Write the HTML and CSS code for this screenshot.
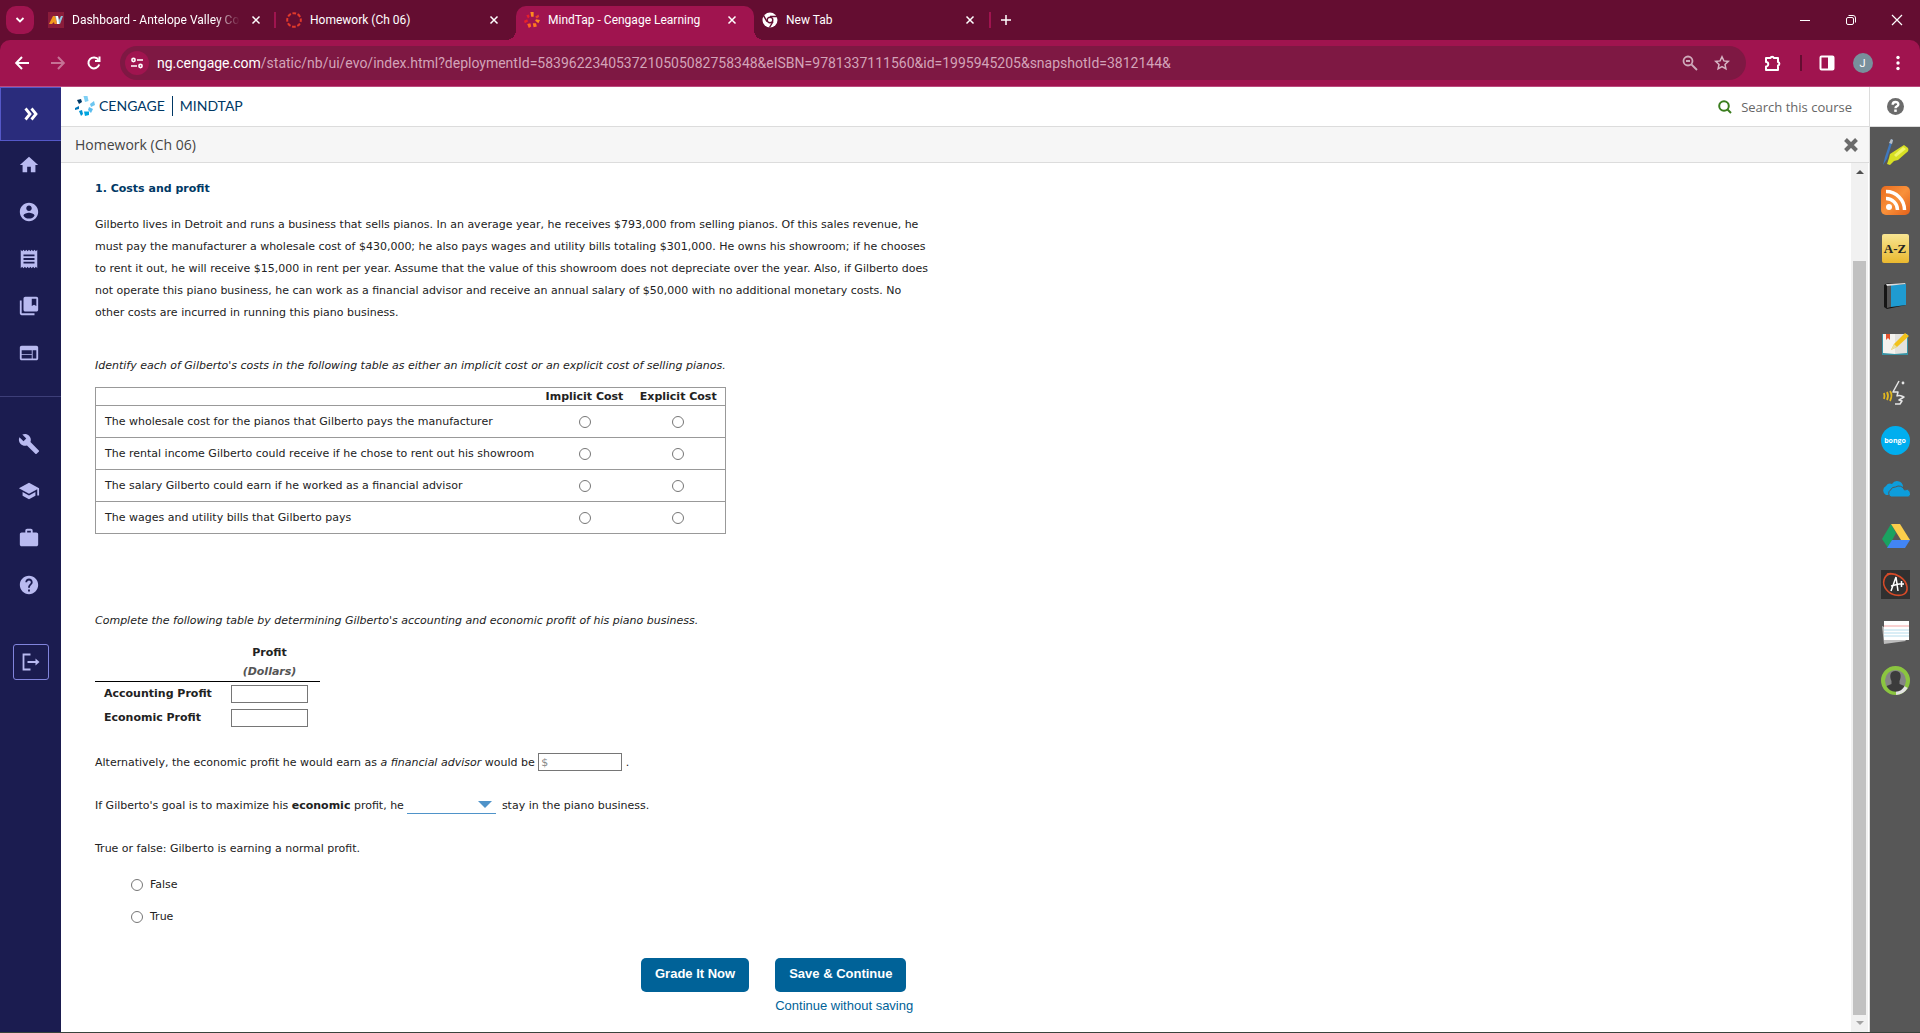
FILE: index.html
```html
<!DOCTYPE html>
<html lang="en">
<head>
    <meta charset="UTF-8">
    <meta name="viewport" content="width=device-width, initial-scale=1.0">
    <title>MindTap - Cengage Learning</title>
    <link rel="stylesheet" href="styles.css">
</head>
<body>
    <svg class="sprite" aria-hidden="true">
        <symbol id="x" viewBox="0 0 10 10"><path d="M1.5 1.5l7 7M8.5 1.5l-7 7" fill="none" stroke="currentColor" stroke-width="1.5"/></symbol>
    </svg>

    <!-- Browser tabs -->
    <div class="tab-strip">
        <button class="tab-search" aria-label="Search tabs">
            <svg width="10" height="10" viewBox="0 0 10 10"><path d="M1.5 3l3.500 3.500L8.500 3" fill="none" stroke="#fff" stroke-width="1.800"/></svg>
        </button>
        <div class="tab">
            <svg width="16" height="16" viewBox="0 0 16 16"><rect width="16" height="16" fill="#8a1c3a"/><path d="M1 12L5 4h2.500l1.500 8H6.500L6 10l-2 2z" fill="#f29a1f"/><path d="M7 4h3l1 4 2-4h2l-3 8h-2z" fill="#8fc5dd"/><path d="M8 4l2 0 1 8H9z" fill="#fff"/></svg>
            <span class="tab-title faded">Dashboard - Antelope Valley Co</span>
            <button class="tab-close" aria-label="Close tab"><svg width="10" height="10"><use href="#x"/></svg></button>
        </div>
        <div class="tab divided">
            <svg width="16" height="16" viewBox="0 0 16 16"><circle cx="8" cy="8" r="6.800" fill="none" stroke="#e23a2b" stroke-width="2" stroke-dasharray="3.700 1.640" stroke-dashoffset="1.800"/></svg>
            <span class="tab-title">Homework (Ch 06)</span>
            <button class="tab-close" aria-label="Close tab"><svg width="10" height="10"><use href="#x"/></svg></button>
        </div>
        <div class="tab active">
            <svg width="16" height="16" viewBox="0 0 20 20"><path d="M8 0h4v6H9z" fill="#ff8a1f"/><path d="M14 6l4-3 1 3-3 2z" fill="#e8452a"/><path d="M15 9l5 1-2 4-4-3z" fill="#ff8a1f"/><path d="M11 14l4 0 1 4-4 1z" fill="#ff7a1f"/><path d="M4 15l4-1 1 4-3 2z" fill="#ff6a1f"/><path d="M0 11l4-2 1 3-4 2z" fill="#e8202a"/><path d="M3 4l3-1 1 3-2 2z" fill="#e8202a"/></svg>
            <span class="tab-title">MindTap - Cengage Learning</span>
            <button class="tab-close" aria-label="Close tab"><svg width="10" height="10"><use href="#x"/></svg></button>
        </div>
        <div class="tab">
            <svg width="16" height="16" viewBox="0 0 16 16"><circle cx="8" cy="8" r="7.500" fill="#fff"/><circle cx="8" cy="8" r="2.800" fill="#fff" stroke="#640d31" stroke-width="1.400"/><path d="M8 4.500h7M5 9.700L1.600 3.700M11 9.700L7.500 15.500" stroke="#640d31" stroke-width="1.400"/></svg>
            <span class="tab-title">New Tab</span>
            <button class="tab-close" aria-label="Close tab"><svg width="10" height="10"><use href="#x"/></svg></button>
        </div>
        <button class="new-tab" aria-label="New tab">
            <svg width="12" height="12" viewBox="0 0 12 12"><path d="M6 1v10M1 6h10" stroke="#fff" stroke-width="1.500"/></svg>
        </button>
        <div class="window-controls">
            <button aria-label="Minimize"><svg width="12" height="12" viewBox="0 0 12 12"><path d="M1 6.500h10" stroke="#fff"/></svg></button>
            <button aria-label="Restore"><svg width="12" height="12" viewBox="0 0 12 12" fill="none" stroke="#fff"><rect x="1.500" y="3.500" width="7" height="7" rx="1.500"/><path d="M3.500 1.500H8A2.500 2.500 0 0 1 10.500 4v4.500"/></svg></button>
            <button aria-label="Close"><svg width="12" height="12" viewBox="0 0 12 12"><path d="M1 1l10 10M11 1L1 11" stroke="#fff" stroke-width="1.200"/></svg></button>
        </div>
    </div>

    <!-- Browser toolbar -->
    <div class="toolbar-back">
        <div class="toolbar">
            <div class="nav-buttons">
                <button aria-label="Back"><svg width="16" height="16" viewBox="0 0 16 16" fill="none" stroke="#fff" stroke-width="2"><path d="M15 8H2.500M8 2L2.200 8 8 14"/></svg></button>
                <button class="dim" aria-label="Forward"><svg width="16" height="16" viewBox="0 0 16 16" fill="none" stroke="#fff" stroke-width="2"><path d="M1 8h12.500M8 2l5.800 6L8 14"/></svg></button>
                <button aria-label="Reload"><svg width="16" height="16" viewBox="0 0 16 16" fill="none" stroke="#fff" stroke-width="2"><path d="M13.200 9.500A5.500 5.500 0 1 1 12.500 4.800"/><path d="M13.500 1.500V6H9"/></svg></button>
            </div>
            <div class="omnibox">
                <button class="site-info" aria-label="Site information"><svg width="14" height="14" viewBox="0 0 14 14" fill="none" stroke="#fff" stroke-width="1.600"><circle cx="3.500" cy="4" r="1.600"/><path d="M7 4h6M1 10h6"/><circle cx="10.500" cy="10" r="1.600"/></svg></button>
                <div class="url"><b>ng.cengage.com</b>/static/nb/ui/evo/index.html?deploymentId=5839622340537210505082758348&amp;eISBN=9781337111560&amp;id=1995945205&amp;snapshotId=3812144&amp;</div>
                <button aria-label="Zoom"><svg width="16" height="16" viewBox="0 0 16 16" fill="none" stroke="#cfa9ba" stroke-width="1.800"><circle cx="6" cy="6" r="4.500"/><path d="M9.500 9.500L15 15M4 6h4"/></svg></button>
                <button aria-label="Bookmark"><svg width="16" height="16" viewBox="0 0 16 16" fill="none" stroke="#d6b4c3" stroke-width="1.500"><path d="M8 1.800l1.900 4.100 4.400.5-3.300 3 .9 4.400L8 11.600l-3.900 2.200.9-4.400-3.300-3 4.400-.5z"/></svg></button>
            </div>
            <div class="toolbar-right">
                <button aria-label="Extensions"><svg width="18" height="18" viewBox="0 0 18 18" fill="none" stroke="#fff" stroke-width="2"><path d="M2 4h4.500a1.700 1.700 0 0 1 3.300 0H14v4a1.800 1.800 0 0 1 0 3.500V16H2v-3.500a2 2 0 0 0 0-4.500z" stroke-linejoin="round"/></svg></button>
                <span class="toolbar-line"></span>
                <button aria-label="Side panel"><svg width="16" height="16" viewBox="0 0 16 16"><rect x="1.500" y="1.500" width="13" height="13" rx="1" fill="none" stroke="#fff" stroke-width="2"/><path d="M9 1h6v14H9z" fill="#fff"/></svg></button>
                <button class="avatar" aria-label="Profile">J</button>
                <button aria-label="Menu"><svg width="16" height="16" viewBox="0 0 16 16" fill="#fff"><circle cx="8" cy="2.500" r="1.700"/><circle cx="8" cy="8" r="1.700"/><circle cx="8" cy="13.500" r="1.700"/></svg></button>
            </div>
        </div>
    </div>

    <div class="page">
        <!-- Left navigation -->
        <nav class="sidebar">
            <button class="expand" aria-label="Expand"><svg width="14" height="14" viewBox="0 0 14 14" fill="none" stroke="#fff" stroke-width="2.800"><path d="M1.500 1.500L6 7l-4.500 5.500M7.500 1.500L12 7l-4.500 5.500"/></svg></button>
            <a href="#" aria-label="Home"><svg viewBox="0 0 24 24"><path d="M10 20v-6h4v6h5v-8h3L12 3 2 12h3v8z"/></svg></a>
            <a href="#" aria-label="Account"><svg viewBox="0 0 24 24"><path d="M12 2C6.480 2 2 6.480 2 12s4.480 10 10 10 10-4.480 10-10S17.520 2 12 2zm0 3c1.660 0 3 1.340 3 3s-1.340 3-3 3-3-1.340-3-3 1.340-3 3-3zm0 14.200c-2.500 0-4.710-1.280-6-3.220.03-1.990 4-3.080 6-3.080 1.990 0 5.970 1.090 6 3.080-1.290 1.940-3.500 3.220-6 3.220z"/></svg></a>
            <a href="#" aria-label="Orders"><svg viewBox="0 0 24 24"><path d="M18 17H6v-2h12v2zm0-4H6v-2h12v2zm0-4H6V7h12v2zM3 22l1.500-1.500L6 22l1.500-1.500L9 22l1.500-1.500L12 22l1.500-1.500L15 22l1.500-1.500L18 22l1.500-1.500L21 22V2l-1.500 1.500L18 2l-1.500 1.500L15 2l-1.500 1.500L12 2l-1.500 1.500L9 2 7.500 3.500 6 2 4.500 3.500 3 2v20z"/></svg></a>
            <a href="#" aria-label="Library"><svg viewBox="0 0 24 24"><path d="M4 6H2v14c0 1.100.9 2 2 2h14v-2H4V6zm16-4H8c-1.100 0-2 .9-2 2v12c0 1.100.9 2 2 2h12c1.100 0 2-.9 2-2V4c0-1.100-.9-2-2-2zm0 10l-2.500-1.500L15 12V4h5v8z"/></svg></a>
            <a href="#" aria-label="Dashboard"><svg viewBox="0 0 24 24"><path d="M20 4H4c-1.100 0-1.990.9-1.990 2L2 18c0 1.100.9 2 2 2h16c1.100 0 2-.9 2-2V6c0-1.100-.9-2-2-2zm-5 14H4v-4h11v4zm0-5H4V9h11v4zm5 5h-4V9h4v9z"/></svg></a>
            <hr>
            <a href="#" aria-label="Tools"><svg viewBox="0 0 24 24"><path d="M22.700 19l-9.100-9.100c.9-2.300.4-5-1.500-6.900-2-2-5-2.400-7.400-1.300L9 6 6 9 1.600 4.700C.4 7.100.9 10.100 2.900 12.100c1.900 1.900 4.600 2.400 6.900 1.500l9.100 9.100c.4.4 1 .4 1.400 0l2.300-2.300c.5-.4.5-1.100.1-1.400z"/></svg></a>
            <a href="#" aria-label="College success"><svg viewBox="0 0 24 24"><path d="M5 13.180v4L12 21l7-3.820v-4L12 17l-7-3.820zM12 3L1 9l11 6 9-4.910V17h2V9L12 3z"/></svg></a>
            <a href="#" aria-label="Career"><svg viewBox="0 0 24 24"><path d="M20 6h-4V4c0-1.110-.89-2-2-2h-4c-1.110 0-2 .89-2 2v2H4c-1.110 0-1.990.89-1.990 2L2 19c0 1.110.89 2 2 2h16c1.110 0 2-.89 2-2V8c0-1.110-.89-2-2-2zm-6 0h-4V4h4v2z"/></svg></a>
            <a href="#" aria-label="Help"><svg viewBox="0 0 24 24"><path d="M12 2C6.480 2 2 6.480 2 12s4.480 10 10 10 10-4.480 10-10S17.520 2 12 2zm1 17h-2v-2h2v2zm2.070-7.750l-.9.920C13.450 12.900 13 13.500 13 15h-2v-.5c0-1.100.45-2.100 1.170-2.830l1.240-1.260c.37-.36.59-.86.59-1.410 0-1.100-.9-2-2-2s-2 .9-2 2H8c0-2.210 1.790-4 4-4s4 1.790 4 4c0 .88-.36 1.680-.93 2.250z"/></svg></a>
            <button class="logout" aria-label="Sign out"><svg width="18" height="18" viewBox="0 0 18 18"><path d="M8.500 1.500h-7v15h7M5.500 9H15" fill="none" stroke="#b9baf0" stroke-width="1.800"/><path d="M13.500 5.500L17.500 9l-4 3.500z" fill="#b9baf0"/></svg></button>
        </nav>

        <div class="course">
            <header class="brand-bar">
                <a class="brand" href="#">
                    <svg width="20" height="20" viewBox="0 0 20 20"><path d="M8.500 0h4l1 5-3.500 1z" fill="#7fd0f5"/><path d="M15 8l4-3 1 4-4 2z" fill="#6cc5f0"/><path d="M14 11l4 2-2 4-3-3z" fill="#5bbdee"/><path d="M9 15.500l5 0 0 3.500-4 1z" fill="#00a7e1"/><path d="M4 15l3-1 1 4-2 2z" fill="#0094d4"/><path d="M0 12l4-2 0 3-4 1z" fill="#0075b8"/><path d="M2 4l4-1 1 3-3 2z" fill="#003865"/></svg>
                    <span>CENGAGE</span><span class="product">MINDTAP</span>
                </a>
                <button class="search"><svg width="14" height="14" viewBox="0 0 14 14" fill="none" stroke="#3a7d1e" stroke-width="2"><circle cx="6" cy="6" r="4.800"/><path d="M9.500 9.500L13 13"/></svg>Search this course</button>
            </header>
            <div class="activity-bar">
                <h1>Homework (Ch 06)</h1>
                <button aria-label="Close activity"><svg width="14" height="14" viewBox="0 0 14 14"><path d="M1.500 1.500l11 11M12.500 1.500l-11 11" stroke="#6b6b6b" stroke-width="4"/></svg></button>
            </div>
            <div class="reader">
                <main class="question">
                    <h2>1. Costs and profit</h2>
                    <p class="intro">Gilberto lives in Detroit and runs a business that sells pianos. In an average year, he receives $793,000 from selling pianos. Of this sales revenue, he<br> must pay the manufacturer a wholesale cost of $430,000; he also pays wages and utility bills totaling $301,000. He owns his showroom; if he chooses<br> to rent it out, he will receive $15,000 in rent per year. Assume that the value of this showroom does not depreciate over the year. Also, if Gilberto does<br> not operate this piano business, he can work as a financial advisor and receive an annual salary of $50,000 with no additional monetary costs. No<br> other costs are incurred in running this piano business.</p>

                    <p class="task">Identify each of Gilberto's costs in the following table as either an implicit cost or an explicit cost of selling pianos.</p>
                    <table class="costs">
                        <thead>
                            <tr><td></td><th id="imp">Implicit Cost</th><th id="exp">Explicit Cost</th></tr>
                        </thead>
                        <tbody>
                            <tr><td id="c1">The wholesale cost for the pianos that Gilberto pays the manufacturer</td><td><input type="radio" name="c1" aria-labelledby="c1 imp"></td><td><input type="radio" name="c1" aria-labelledby="c1 exp"></td></tr>
                            <tr><td id="c2">The rental income Gilberto could receive if he chose to rent out his showroom</td><td><input type="radio" name="c2" aria-labelledby="c2 imp"></td><td><input type="radio" name="c2" aria-labelledby="c2 exp"></td></tr>
                            <tr><td id="c3">The salary Gilberto could earn if he worked as a financial advisor</td><td><input type="radio" name="c3" aria-labelledby="c3 imp"></td><td><input type="radio" name="c3" aria-labelledby="c3 exp"></td></tr>
                            <tr><td id="c4">The wages and utility bills that Gilberto pays</td><td><input type="radio" name="c4" aria-labelledby="c4 imp"></td><td><input type="radio" name="c4" aria-labelledby="c4 exp"></td></tr>
                        </tbody>
                    </table>

                    <p class="task second">Complete the following table by determining Gilberto's accounting and economic profit of his piano business.</p>
                    <table class="profit">
                        <thead>
                            <tr><td></td><th>Profit<br><i>(Dollars)</i></th></tr>
                        </thead>
                        <tbody>
                            <tr><th><label for="accounting">Accounting Profit</label></th><td><input type="text" id="accounting"></td></tr>
                            <tr><th><label for="economic">Economic Profit</label></th><td><input type="text" id="economic"></td></tr>
                        </tbody>
                    </table>

                    <p class="line"><label for="advisor">Alternatively, the economic profit he would earn as <i>a financial advisor</i> would be</label> <input type="text" id="advisor" placeholder="$"> .</p>
                    <p class="line"><label for="stay">If Gilberto's goal is to maximize his <b>economic</b> profit, he</label> <span class="dropdown"><select id="stay"><option></option><option>should</option><option>should not</option></select></span> stay in the piano business.</p>
                    <p>True or false: Gilberto is earning a normal profit.</p>
                    <div class="choices">
                        <label><input type="radio" name="normal">False</label>
                        <label><input type="radio" name="normal">True</label>
                    </div>

                    <div class="actions">
                        <button>Grade It Now</button>
                        <div class="save">
                            <button>Save &amp; Continue</button>
                            <a href="#">Continue without saving</a>
                        </div>
                    </div>
                </main>
                <div class="scrollbar">
                    <svg width="8" height="4" viewBox="0 0 8 4"><path d="M0 4l4-4 4 4z" fill="#505050"/></svg>
                    <div class="thumb"></div>
                    <svg width="8" height="4" viewBox="0 0 8 4"><path d="M0 0l4 4 4-4z" fill="#a3a3a3"/></svg>
                </div>
            </div>
        </div>

        <!-- Course apps -->
        <aside class="apps">
            <button class="help" aria-label="Help"><svg width="17" height="17" viewBox="0 0 24 24"><path fill="#6b6b6b" d="M12 0a12 12 0 1 0 0 24 12 12 0 0 0 0-24z"/><path d="M8 9.500c0-5 8-5 8-.5 0 3-4 2.500-4 5.500" fill="none" stroke="#fff" stroke-width="3.400"/><path d="M10.200 16.200h3.600v3.400h-3.600z" fill="#fff"/></svg></button>
            <div class="app-list">
                <a href="#" aria-label="Notes"><svg viewBox="0 0 29 29"><path d="M10 1l2 1-6 19-4 6 2-8z" fill="#3f78bd"/><path d="M10 1l2 1-1 4-3-1z" fill="#b8bcc2"/><path d="M23 7l4 3c1 2 0 4-2 5l-8 7-4 1-4 4-3-1 2-6 1-4z" fill="#d7df23"/><path d="M22 9l3 2-10 8-2-2z" fill="#f0f56a"/></svg></a>
                <a href="#" aria-label="RSS feed"><svg viewBox="0 0 29 29"><defs><linearGradient id="rss" x2="1" y2="1"><stop stop-color="#e86a1e"/><stop offset=".5" stop-color="#f9913a"/><stop offset="1" stop-color="#e2601a"/></linearGradient></defs><rect width="29" height="29" rx="5" fill="url(#rss)"/><circle cx="8" cy="21" r="3" fill="#fff"/><path d="M5 12.500A11.500 11.500 0 0 1 16.500 24M5 5.500A18.500 18.500 0 0 1 23.500 24" fill="none" stroke="#fff" stroke-width="3.500"/></svg></a>
                <a class="glossary" href="#">A-Z</a>
                <a href="#" aria-label="eBook"><svg viewBox="0 0 29 29"><path d="M3 3l4-2 18 0v22l-19 4-3-2z" fill="#161616"/><path d="M6 4l4-1v22l-4 1z" fill="#555"/><path d="M10 3l15-1v21l-15 2z" fill="#1f9bd1"/><path d="M5 2l19-1 1 1-19 2z" fill="#ddd"/></svg></a>
                <a href="#" aria-label="Notebook"><svg viewBox="0 0 29 29"><path d="M1 4h26v21H1z" fill="#3793a5"/><path d="M2 4h12v20l-12-1z" fill="#f5f3ef"/><path d="M14 4h12v19l-12 1z" fill="#e3e2de"/><path d="M5 4h4v6l-2-2-2 2z" fill="#e5532d"/><path d="M24 3l4 3-12 11-6 3 3-6z" fill="#f2c21b"/><path d="M10 20l3-6 3 3z" fill="#e8dfa0"/></svg></a>
                <a href="#" aria-label="ReadSpeaker"><svg viewBox="0 0 29 29" fill="none"><path d="M18 3l-6 11 5 0-1 4c3-2 6 1 7 1l-5 3 3 1-2 3h-5" stroke="#e6e6e6" stroke-width="1.500" stroke-linejoin="round"/><circle cx="22" cy="5" r="1.400" fill="#e6e6e6"/><path d="M9 13q3 4 0 10M6 14q2 4 0 8M3 15q1 3 0 6" stroke="#e2b81f" stroke-width="1.800"/></svg></a>
                <a class="bongo" href="#">bongo</a>
                <a href="#" aria-label="OneDrive"><svg viewBox="0 0 29 29"><path d="M5 21a5 5 0 0 1 0-9 5 5 0 0 1 6-2 6 6 0 0 1 11 2l-3 9z" fill="#0d9ddb"/><path d="M10 23a4 4 0 0 1-.5-7 5 5 0 0 1 5-3 6 6 0 0 1 9 3 4 4 0 0 1 4 7z" fill="#0d9ddb" stroke="#575757"/></svg></a>
                <a href="#" aria-label="Google Drive"><svg viewBox="0 0 29 29"><path d="M10 2l5 9-8 15-6-9z" fill="#1aa260"/><path d="M10 2h9l10 16h-9z" fill="#fbcd4b"/><path d="M11 18h18l-5 8H6z" fill="#4285f4"/></svg></a>
                <a href="#" aria-label="Gradebook"><svg viewBox="0 0 29 29" fill="none"><path d="M0 0h29v29H0z" fill="#303030"/><path d="M6 4C15 2 25 9 26 17s-6 9-12 8S1 17 3 10 10 3 16 5" stroke="#d64a28" stroke-width="1.600"/><path d="M10 21l5-14 2 14M10 16l8-2M18 14h5M20.500 11v6" stroke="#fff" stroke-width="1.500"/></svg></a>
                <a href="#" aria-label="Flashcards"><svg viewBox="0 0 29 29"><path d="M1 8l20 10 4 5-22 3z" fill="#bdbdbd"/><path d="M3 3h25v19H3z" fill="#fff"/><path d="M3 8h25" stroke="#f2a3a3"/><path d="M3 12h25M3 15h25M3 18h25" stroke="#b5dcec"/></svg></a>
                <a href="#" aria-label="Progress"><svg viewBox="0 0 29 29"><circle cx="14.500" cy="14.500" r="12.500" fill="#858585" stroke="#8bc540" stroke-width="4"/><path d="M15 27a12.500 12.500 0 0 0 10-6" fill="none" stroke="#e3e3e3" stroke-width="4"/><path d="M14.500 5c6 0 6 6 4 10v3l5 2a10 10 0 0 1-18 0l5-2v-3c-2-4-2-10 4-10z" fill="#3c3c3c"/></svg></a>
            </div>
        </aside>
    </div>
</body>
</html>
```
FILE: styles.css
```css
* {
    margin: 0;
    padding: 0;
    box-sizing: border-box;
}

body {
    font-family: "Open Sans", "Noto Sans", sans-serif;
    background: #ffffff;
    color: #222;
    min-height: 100vh;
    display: flex;
    flex-direction: column;
    border-bottom: 1px solid #38433c;
}

button {
    border: none;
    background: none;
    color: inherit;
    font: inherit;
    cursor: pointer;
    display: flex;
    align-items: center;
    justify-content: center;
}

a {
    text-decoration: none;
}

.sprite {
    display: none;
}

/* Tabs */
.tab-strip {
    display: flex;
    align-items: center;
    height: 40px;
    padding-left: 6px;
    background: #640d31;
    color: #fff;
    font-family: Roboto, sans-serif;
    font-size: 12px;
}

.tab-search {
    width: 28px;
    height: 28px;
    margin-right: 6px;
    border-radius: 10px;
    background: #a0144f;
}

.tab {
    position: relative;
    display: flex;
    align-items: center;
    gap: 8px;
    width: 238px;
    height: 34px;
    margin-top: 6px;
    padding: 0 14px 6px 8px;
}

.tab-title {
    flex: 1;
    white-space: nowrap;
}

.tab-title.faded {
    -webkit-mask-image: linear-gradient(to right, #000 85%, transparent);
    mask-image: linear-gradient(to right, #000 85%, transparent);
}

.tab-close {
    width: 16px;
    height: 16px;
}

.tab.divided::before {
    content: '';
    position: absolute;
    left: -4px;
    top: 6px;
    width: 2px;
    height: 16px;
    background: #a0144f;
}

.tab.active {
    background: #a0144f;
    border-radius: 10px 10px 0 0;
}

.tab.active::before,
.tab.active::after {
    content: '';
    position: absolute;
    bottom: 0;
    width: 10px;
    height: 10px;
}

.tab.active::before {
    left: -10px;
    background: radial-gradient(circle at 0 0, transparent 10px, #a0144f 10px);
}

.tab.active::after {
    right: -10px;
    background: radial-gradient(circle at 100% 0, transparent 10px, #a0144f 10px);
}

.new-tab {
    height: 16px;
    margin-left: -3px;
    padding-left: 9px;
    border-left: 2px solid #a0144f;
}

.window-controls {
    display: flex;
    margin-left: auto;
}

.window-controls button {
    width: 46px;
    height: 40px;
}

/* Toolbar */
.toolbar-back {
    background: #640d31;
}

.toolbar {
    display: flex;
    align-items: center;
    height: 47px;
    padding: 0 8px 0 4px;
    background: #a0144f;
    border-bottom: 1px solid #bb4a7d;
    border-radius: 10px 10px 0 0;
    font-family: Roboto, sans-serif;
}

.nav-buttons {
    display: flex;
    margin-right: 8px;
}

.nav-buttons button {
    width: 36px;
    height: 36px;
}

.nav-buttons .dim {
    opacity: 0.4;
}

.omnibox {
    flex: 1;
    display: flex;
    align-items: center;
    gap: 16px;
    height: 34px;
    padding: 0 16px 0 5px;
    border-radius: 17px;
    background: #7e1843;
}

.site-info {
    width: 24px;
    height: 24px;
    border-radius: 50%;
    background: #a0144f;
}

.url {
    flex: 1;
    margin-left: -8px;
    color: #d3a3b8;
    font-size: 14px;
    white-space: nowrap;
}

.url b {
    color: #fff;
    font-weight: 400;
}

.toolbar-right {
    display: flex;
    align-items: center;
    justify-content: space-between;
    width: 166px;
    padding: 0 6px 0 18px;
}

.toolbar-line {
    width: 2px;
    height: 16px;
    background: #640d31;
}

.avatar {
    width: 20px;
    height: 20px;
    border-radius: 50%;
    background: #78909c;
    color: #fff;
    font-size: 11px;
}

/* Page frame */
.page {
    flex: 1;
    display: flex;
}

.sidebar {
    display: flex;
    flex-direction: column;
    width: 61px;
    background: #1b1c50;
}

.sidebar .expand {
    height: 54px;
    border: 1px solid #5558c8;
    border-right: none;
    background: #2a2c7c;
}

.sidebar a {
    display: flex;
    align-items: center;
    height: 47px;
    padding-left: 18px;
}

.sidebar a svg {
    width: 22px;
    height: 22px;
    fill: #b9baf0;
}

.sidebar hr {
    margin: 20px 0 23px;
    border: none;
    border-top: 1px solid #3d3e78;
}

.sidebar .logout {
    width: 36px;
    height: 36px;
    margin: 36px 0 0 13px;
    border: 1px solid #8184dc;
    border-radius: 3px;
}

.course {
    flex: 1;
    display: flex;
    flex-direction: column;
    border-right: 1px solid #dcdcdc;
}

.brand-bar,
.activity-bar {
    display: flex;
    align-items: center;
    justify-content: space-between;
    border-bottom: 1px solid #dcdcdc;
}

.brand-bar {
    height: 40px;
    padding: 0 17px 0 14px;
}

.brand {
    display: flex;
    align-items: center;
    gap: 4px;
    padding-bottom: 2px;
    color: #003865;
    font-family: Lato, sans-serif;
    font-size: 14px;
    line-height: 20px;
}

.brand .product {
    margin-left: 3px;
    padding-left: 7px;
    border-left: 1px solid #003865;
}

.search {
    gap: 9px;
    color: #666;
    font-size: 13px;
}

.activity-bar {
    height: 36px;
    padding: 0 11px 0 14px;
    background: #f6f6f6;
}

.activity-bar h1 {
    color: #444;
    font-size: 14px;
    font-weight: 400;
}

.reader {
    flex: 1;
    display: flex;
}

.question {
    flex: 1;
    padding: 15px 34px 18px;
    font-family: Verdana, "DejaVu Sans", sans-serif;
    font-size: 11px;
    line-height: 22px;
}

.question h2 {
    margin-bottom: 14px;
    color: #003865;
    font-size: 11px;
}

.intro {
    margin-bottom: 31px;
    white-space: nowrap;
}

.task {
    font-style: italic;
}

.task.second {
    margin: 76px 0 11px;
}

input[type="radio"] {
    width: 12px;
    height: 12px;
    appearance: none;
    border: 1px solid #767676;
    border-radius: 50%;
    background: #fff;
}

input[type="radio"]:checked {
    background: radial-gradient(#0075ff 45%, #fff 50%);
}

input[type="text"] {
    height: 18px;
    padding: 0 2px;
    border: 1px solid #767676;
    font: inherit;
    line-height: 16px;
}

input::placeholder {
    color: #888;
}

.costs {
    width: 631px;
    margin-top: 10px;
    border-collapse: collapse;
    border: 1px solid #999;
    table-layout: fixed;
    line-height: 17px;
}

.costs tr {
    height: 32px;
    border-bottom: 1px solid #999;
}

.costs thead tr {
    height: 18px;
}

.costs th,
.costs td {
    width: 94px;
    text-align: center;
}

.costs td input {
    display: block;
    margin: 0 auto;
}

.costs td:first-child {
    width: auto;
    padding-left: 9px;
    text-align: left;
}

.profit {
    width: 225px;
    margin-bottom: 22px;
    border-collapse: collapse;
    line-height: 19px;
}

.profit thead tr {
    border-bottom: 1px solid #000;
}

.profit i {
    color: #555;
}

.profit tbody th {
    width: 124px;
    padding-left: 9px;
    text-align: left;
}

.profit tbody td {
    height: 24px;
    text-align: center;
}

.profit input[type="text"] {
    display: block;
    width: 77px;
    margin: 0 auto;
}

.line {
    margin-bottom: 21px;
}

.line input[type="text"] {
    width: 84px;
}

.dropdown {
    position: relative;
    margin-right: 2px;
}

.dropdown::after {
    content: '';
    position: absolute;
    right: 4px;
    top: 2px;
    border: 7px solid transparent;
    border-top-color: #4f93c9;
    border-bottom: none;
    pointer-events: none;
}

.dropdown select {
    width: 89px;
    height: 16px;
    appearance: none;
    border: none;
    border-bottom: 1px solid #4f93c9;
    background: none;
    font: inherit;
    vertical-align: middle;
}

.choices {
    display: flex;
    flex-direction: column;
    gap: 10px;
    padding: 14px 0 0 36px;
}

.choices label {
    display: flex;
    align-items: center;
    gap: 7px;
}

.actions {
    display: flex;
    align-items: flex-start;
    gap: 26px;
    margin: 30px 0 0 546px;
    font-family: "Liberation Sans", Arial, sans-serif;
    font-size: 13px;
    line-height: 16px;
}

.actions button {
    height: 34px;
    padding: 0 14px 2px;
    border-radius: 5px;
    background: #006298;
    color: #fff;
    font-weight: 700;
}

.save {
    display: flex;
    flex-direction: column;
    align-items: flex-start;
    gap: 6px;
}

.save a {
    color: #006298;
}

.scrollbar {
    display: flex;
    flex-direction: column;
    align-items: center;
    width: 17px;
    margin-right: 1px;
    padding: 7px 0;
    background: #f1f1f1;
}

.scrollbar svg {
    flex-shrink: 0;
}

.scrollbar .thumb {
    flex: 1;
    width: 13px;
    margin: 87px 0 6px;
    background: #c1c1c1;
}

/* App rail */
.apps {
    width: 50px;
    display: flex;
    flex-direction: column;
}

.help {
    height: 40px;
    border-bottom: 1px solid #dcdcdc;
}

.app-list {
    flex: 1;
    display: flex;
    flex-direction: column;
    align-items: center;
    gap: 19px;
    padding-top: 11px;
    background: #575757;
}

.app-list a {
    display: flex;
    align-items: center;
    justify-content: center;
    width: 29px;
    height: 29px;
}

.app-list svg {
    width: 29px;
    height: 29px;
}

.app-list .glossary {
    width: 27px;
    border-radius: 2px;
    background: linear-gradient(#f8e593, #eab92f);
    color: #222;
    font: 700 13px "Liberation Serif", serif;
}

.app-list .bongo {
    border-radius: 50%;
    background: #00aeef;
    color: #fff;
    font-size: 7px;
    font-weight: 700;
}
```
